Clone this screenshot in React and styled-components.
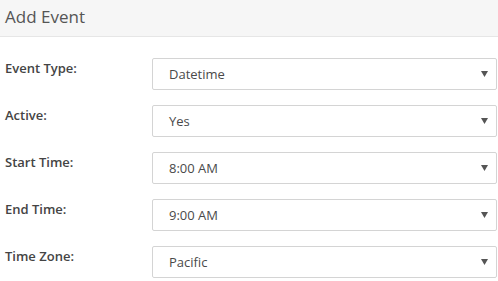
import styled, { createGlobalStyle } from 'styled-components'

const GlobalStyle = createGlobalStyle`
  body {
    margin: 0;
    background: #fff;
    font-family: "Open Sans", "Liberation Sans", sans-serif;
  }
`

const Panel = styled.div`
  width: 498px;
`

const Header = styled.div`
  height: 37px;
  background: #f6f6f6;
  border-bottom: 1px solid #e6e6e6;
  display: flex;
  align-items: center;
  padding: 0 5px;
  box-sizing: border-box;
`

const Title = styled.h3`
  margin: -4px 0 0;
  font-size: 17px;
  font-weight: 400;
  color: #555;
`

const Form = styled.div`
  display: flex;
  flex-direction: column;
  gap: 15px;
  padding: 21px 1px 0 5px;
`

const Row = styled.div`
  display: grid;
  grid-template-columns: 147px 1fr;
  align-items: start;
`

const Label = styled.label`
  font-size: 13px;
  font-weight: 600;
  color: #444;
  line-height: 18px;
  padding-top: 1px;
`

const SelectBox = styled.div`
  height: 32px;
  box-sizing: border-box;
  border: 1px solid #d4d4d4;
  border-radius: 2px;
  display: flex;
  align-items: center;
  justify-content: space-between;
  padding: 0 8px 0 16px;
  font-size: 13px;
  color: #4a4a4a;
`

const Arrow = () => (
  <svg width="7" height="6" viewBox="0 0 7 6">
    <path d="M0 0 L7 0 L3.5 6 Z" fill="#555" />
  </svg>
)

const fields = [
  ['Event Type:', 'Datetime'],
  ['Active:', 'Yes'],
  ['Start Time:', '8:00 AM'],
  ['End Time:', '9:00 AM'],
  ['Time Zone:', 'Pacific'],
]

function App() {
  return (
    <>
      <GlobalStyle />
      <Panel>
        <Header>
          <Title>Add Event</Title>
        </Header>
        <Form>
          {fields.map(([label, value]) => (
            <Row key={label}>
              <Label>{label}</Label>
              <SelectBox>
                <span>{value}</span>
                <Arrow />
              </SelectBox>
            </Row>
          ))}
        </Form>
      </Panel>
    </>
  )
}

export default App
